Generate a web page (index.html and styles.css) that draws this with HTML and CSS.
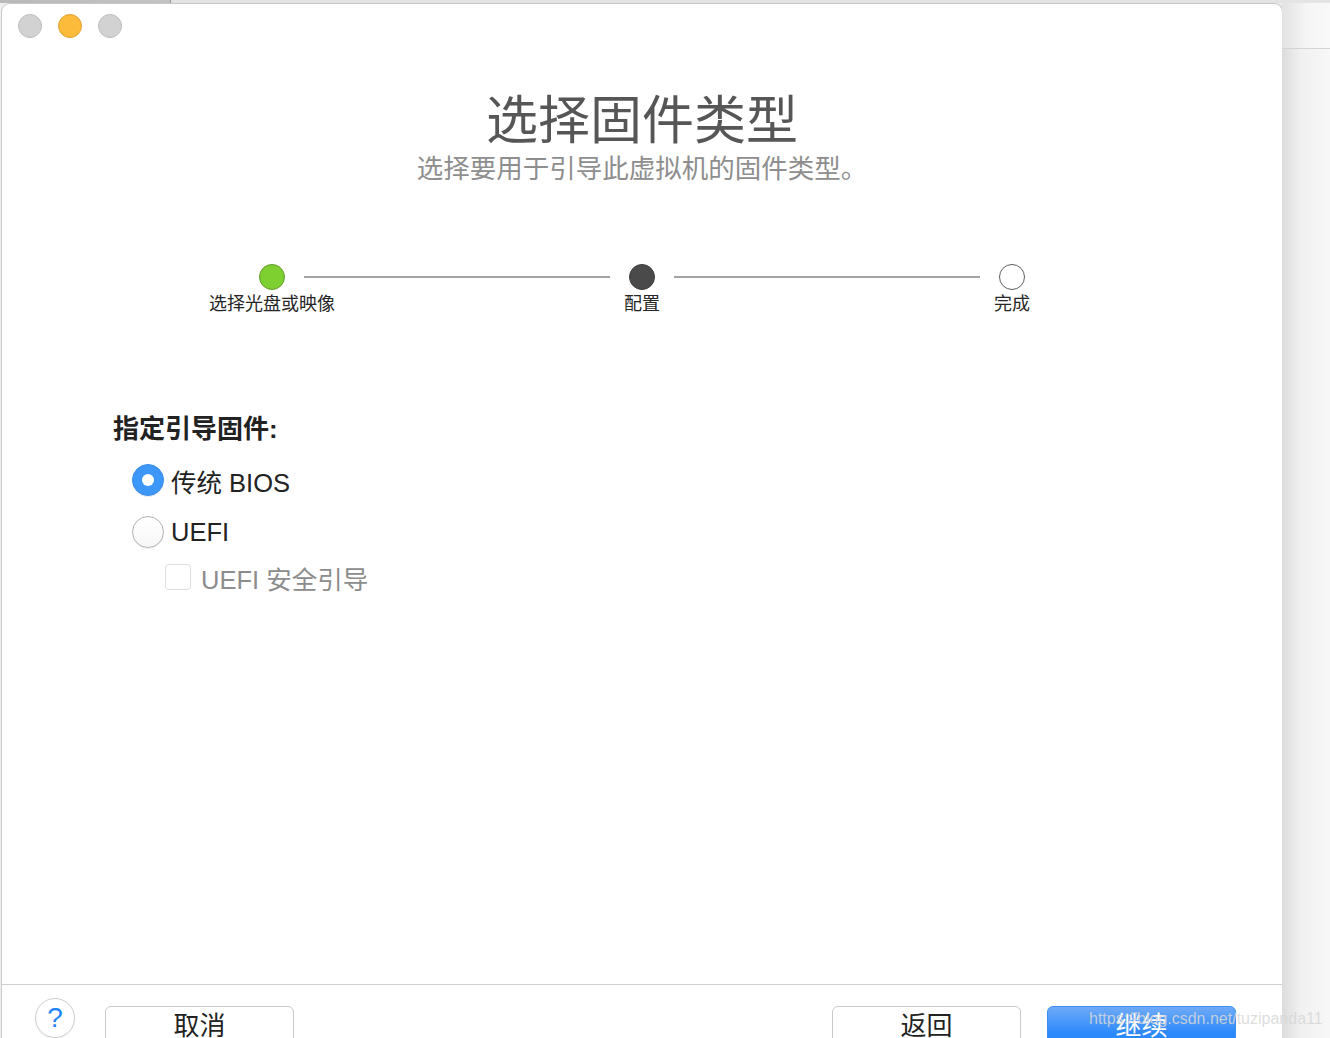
FILE: index.html
```html
<!DOCTYPE html>
<html lang="zh-CN">
<head>
<meta charset="utf-8">
<title>选择固件类型</title>
<link rel="stylesheet" href="styles.css">
</head>
<body>
<div class="desktop">
  <div class="window">
    <div class="titlebar">
      <span class="light light-grey"></span>
      <span class="light light-yellow"></span>
      <span class="light light-grey"></span>
    </div>
    <header class="heading">
      <h1 class="title">选择固件类型</h1>
      <p class="subtitle">选择要用于引导此虚拟机的固件类型。</p>
    </header>
    <div class="steps">
      <div class="step">
        <span class="dot dot-done"></span>
        <span class="step-label">选择光盘或映像</span>
      </div>
      <span class="step-line"></span>
      <div class="step">
        <span class="dot dot-current"></span>
        <span class="step-label">配置</span>
      </div>
      <span class="step-line"></span>
      <div class="step">
        <span class="dot dot-todo"></span>
        <span class="step-label">完成</span>
      </div>
    </div>
    <section class="form">
      <h2 class="form-title">指定引导固件:</h2>
      <div class="option">
        <span class="radio radio-on"></span>
        <span class="option-label">传统 BIOS</span>
      </div>
      <div class="option">
        <span class="radio"></span>
        <span class="option-label">UEFI</span>
      </div>
      <div class="option option-sub">
        <span class="checkbox"></span>
        <span class="option-label disabled">UEFI 安全引导</span>
      </div>
    </section>
    <footer class="footer">
      <span class="help">?</span>
      <span class="btn">取消</span>
      <span class="spacer"></span>
      <span class="btn">返回</span>
      <span class="btn btn-primary">继续</span>
    </footer>
  </div>
  <div class="side">
    <div class="side-top"></div>
  </div>
</div>
<div class="watermark">https://blog.csdn.net/tuzipanda11</div>
</body>
</html>
```
FILE: styles.css
```css
html, body {
  margin: 0;
  padding: 0;
  height: 100%;
  overflow: hidden;
}
body {
  font-family: "Liberation Sans", "Noto Sans CJK SC", sans-serif;
  background:
    linear-gradient(to right, #b9b9b9 0, #c4c4c4 170px, #9a9a9a 170px, #9a9a9a 171px, #e4e4e4 171px) top left / 100% 3px no-repeat,
    #f0f0f0;
  position: relative;
}
.desktop {
  display: flex;
  height: 100%;
}
.window {
  width: 1280px;
  flex: none;
  margin: 4px 0 0 2px;
  height: 1060px;
  background: #fff;
  border-radius: 8px 8px 0 0;
  box-shadow: 0 0 0 1px #c9c9c9, 1px 0 2px rgba(0,0,0,0.25);
  display: flex;
  flex-direction: column;
}
.side {
  flex: 1;
  margin-top: 3px;
  background: linear-gradient(to right, #dcdcdc, #f1f1f1 40%, #f7f7f7);
}
.side-top {
  height: 45px;
  border-bottom: 1px solid #d4d4d4;
  background: linear-gradient(to right, #e2e2e2, #f5f5f5 50%, #f9f9f9);
}
.titlebar {
  display: flex;
  gap: 16px;
  padding: 10px 0 0 16px;
  height: 24px;
}
.light {
  width: 22px;
  height: 22px;
  border-radius: 50%;
  box-sizing: content-box;
}
.light-grey {
  background: #d2d2d2;
  border: 1px solid #bdbdbd;
}
.light-yellow {
  background: #fdbb3c;
  border: 1px solid #e0a133;
}
.heading {
  text-align: center;
  margin-top: 52px;
}
.title {
  margin: 0;
  font-size: 52px;
  font-weight: normal;
  line-height: 62px;
  color: #565656;
}
.subtitle {
  margin: 0;
  font-size: 26.5px;
  line-height: 34px;
  color: #8e8e8e;
}
.steps {
  display: flex;
  align-items: flex-start;
  margin: 78px 0 0 257px;
  width: 766px;
}
.step {
  width: 26px;
  display: flex;
  flex-direction: column;
  align-items: center;
}
.dot {
  width: 24px;
  height: 24px;
  border-radius: 50%;
  box-sizing: content-box;
}
.dot-done {
  background: #7ecf30;
  border: 1px solid #5f9a2a;
}
.dot-current {
  background: #4a4a4a;
  border: 1px solid #3a3a3a;
}
.dot-todo {
  background: #fff;
  border: 1px solid #5d5d5d;
}
.step-label {
  white-space: nowrap;
  font-size: 18px;
  line-height: 24px;
  margin-top: 2px;
  color: #262626;
}
.step-line {
  flex: 1;
  height: 2px;
  background: #a3a3a3;
  margin: 12px 19px 0;
}
.form {
  margin: 96px 0 0 111px;
  display: flex;
  flex-direction: column;
}
.form-title {
  margin: 0 0 17px;
  font-size: 26px;
  line-height: 34px;
  font-weight: bold;
  color: #222;
}
.option {
  display: flex;
  align-items: center;
  gap: 7px;
  margin-left: 19px;
  height: 34px;
  margin-bottom: 18px;
}
.option-sub {
  margin-left: 52px;
  gap: 10px;
  margin-top: -7px;
}
.radio {
  width: 30px;
  height: 30px;
  border-radius: 50%;
  border: 1px solid #b4b4b4;
  background: linear-gradient(#fff, #f7f7f7);
  box-shadow: 0 1px 1px rgba(0,0,0,0.08);
  flex: none;
  display: flex;
  align-items: center;
  justify-content: center;
}
.radio-on {
  background: #3c97f8;
  border-color: #3a8fe9;
}
.radio-on::after {
  content: "";
  width: 12px;
  height: 12px;
  border-radius: 50%;
  background: #fff;
}
.checkbox {
  width: 24px;
  height: 24px;
  border: 1px solid #dedede;
  border-radius: 4px;
  background: #fff;
  flex: none;
}
.option-label {
  font-size: 25.5px;
  color: #222;
  white-space: nowrap;
}
.option-label.disabled {
  color: #8c8c8c;
}
.footer {
  margin-top: auto;
  height: 79px;
  border-top: 1px solid #cfcfcf;
  display: flex;
  align-items: flex-start;
  padding: 0 46px 0 33px;
}
.help {
  width: 38px;
  height: 38px;
  margin-top: 13px;
  border-radius: 50%;
  border: 1px solid #cdcdcd;
  box-shadow: 0 1px 1px rgba(0,0,0,0.08);
  color: #1f83fb;
  font-size: 28px;
  line-height: 38px;
  text-align: center;
  flex: none;
}
.btn {
  width: 187px;
  height: 50px;
  margin: 21px 0 0 30px;
  border: 1px solid #cacaca;
  border-radius: 6px;
  box-shadow: 0 1px 1px rgba(0,0,0,0.06);
  text-align: center;
  font-size: 26px;
  line-height: 38px;
  color: #222;
  flex: none;
}
.spacer {
  flex: 1;
}
.btn-primary {
  margin-left: 26px;
  border-color: #3b8ff0;
  background: linear-gradient(#6eaaf7, #2f8bfb 50%, #1a7efb);
  color: #fff;
}
.watermark {
  position: absolute;
  left: 1089px;
  top: 1008px;
  font-size: 16px;
  line-height: 22px;
  color: rgba(215, 215, 215, 0.85);
  white-space: nowrap;
}
```
